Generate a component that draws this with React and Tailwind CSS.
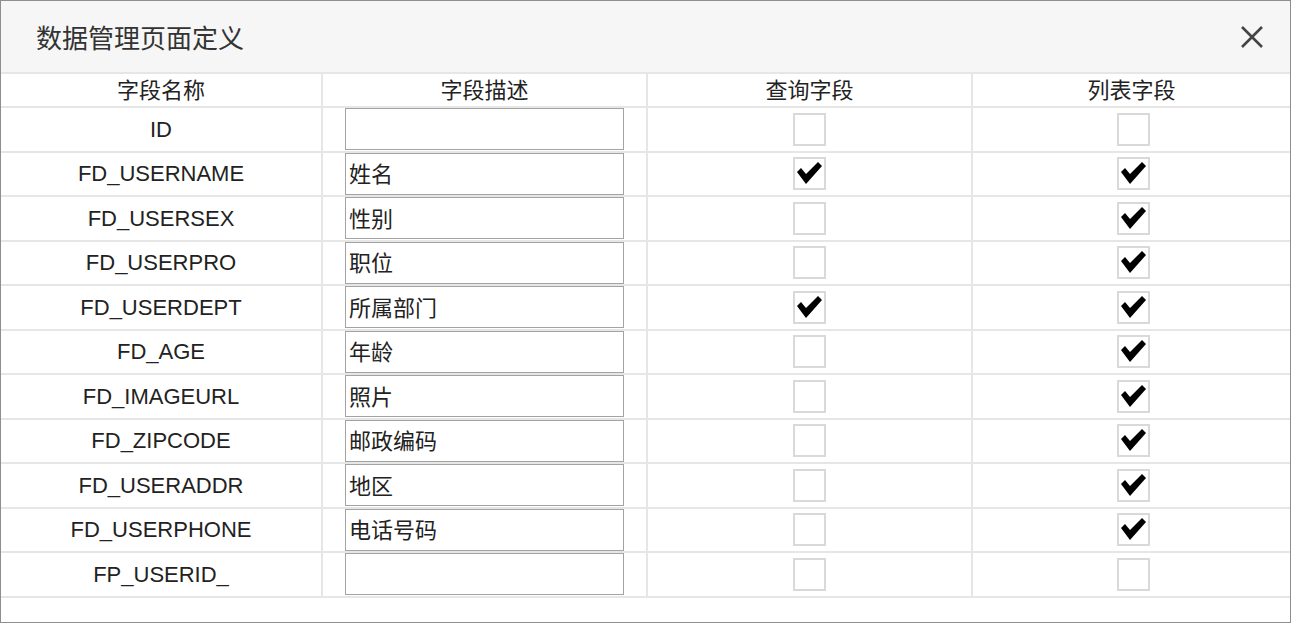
import React from 'react';

const rows = [
  { name: 'ID', desc: '', query: false, list: false },
  { name: 'FD_USERNAME', desc: '姓名', query: true, list: true },
  { name: 'FD_USERSEX', desc: '性别', query: false, list: true },
  { name: 'FD_USERPRO', desc: '职位', query: false, list: true },
  { name: 'FD_USERDEPT', desc: '所属部门', query: true, list: true },
  { name: 'FD_AGE', desc: '年龄', query: false, list: true },
  { name: 'FD_IMAGEURL', desc: '照片', query: false, list: true },
  { name: 'FD_ZIPCODE', desc: '邮政编码', query: false, list: true },
  { name: 'FD_USERADDR', desc: '地区', query: false, list: true },
  { name: 'FD_USERPHONE', desc: '电话号码', query: false, list: true },
  { name: 'FP_USERID_', desc: '', query: false, list: false },
];

const Check = ({ checked }) => (
  <div className="w-[33px] h-[33px] border-2 border-[#d9d9d9] bg-white flex items-center justify-center">
    {checked && (
      <svg width="29" height="29" viewBox="0 0 29 29">
        <polygon points="2,13 6,9 11,15 23,3 27,7 11,25" fill="#000" />
      </svg>
    )}
  </div>
);

const App = () => {
  return (
    <div className="w-[1291px] h-[623px] border border-[#8e8e8e] bg-white flex flex-col font-['Liberation_Sans','Noto_Sans_CJK_SC',sans-serif] text-[#222]">
      {/* Dialog header */}
      <div className="h-[73px] shrink-0 bg-[#f6f6f6] border-b-2 border-[#e6e6e6] flex items-center justify-between pl-[35px] pr-[26px]">
        <h1 className="text-[26px] text-[#333] font-['Noto_Sans_CJK_SC',sans-serif] leading-none">数据管理页面定义</h1>
        <svg width="24" height="24" viewBox="0 0 24 24" className="text-[#444]">
          <path d="M2 2 L22 22 M22 2 L2 22" stroke="currentColor" strokeWidth="2.6" />
        </svg>
      </div>

      {/* Field table */}
      <div className="text-[22px]">
        <div className="grid grid-cols-[322px_325px_325px_1fr] h-[34px] border-b-2 border-[#e6e6e6]">
          <div className="flex items-center justify-center border-r-2 border-[#e6e6e6]">字段名称</div>
          <div className="flex items-center justify-center border-r-2 border-[#e6e6e6]">字段描述</div>
          <div className="flex items-center justify-center border-r-2 border-[#e6e6e6]">查询字段</div>
          <div className="flex items-center justify-center">列表字段</div>
        </div>
        {rows.map((r) => (
          <div key={r.name} className="grid grid-cols-[322px_325px_325px_1fr] h-[44.5px] border-b-2 border-[#e6e6e6]">
            <div className="flex items-center justify-center border-r-2 border-[#e6e6e6]">{r.name}</div>
            <div className="flex items-center pl-[22px] border-r-2 border-[#e6e6e6]">
              <input
                readOnly
                value={r.desc}
                className="w-[279px] h-[42px] border border-[#a3a3a3] bg-white pl-[3px] pb-[3px] text-[22px] text-[#222] outline-none font-['Noto_Sans_CJK_SC',sans-serif]"
              />
            </div>
            <div className="flex items-center justify-center border-r-2 border-[#e6e6e6]">
              <Check checked={r.query} />
            </div>
            <div className="flex items-center justify-center pl-[3px]">
              <Check checked={r.list} />
            </div>
          </div>
        ))}
      </div>
    </div>
  );
};

export default App;
